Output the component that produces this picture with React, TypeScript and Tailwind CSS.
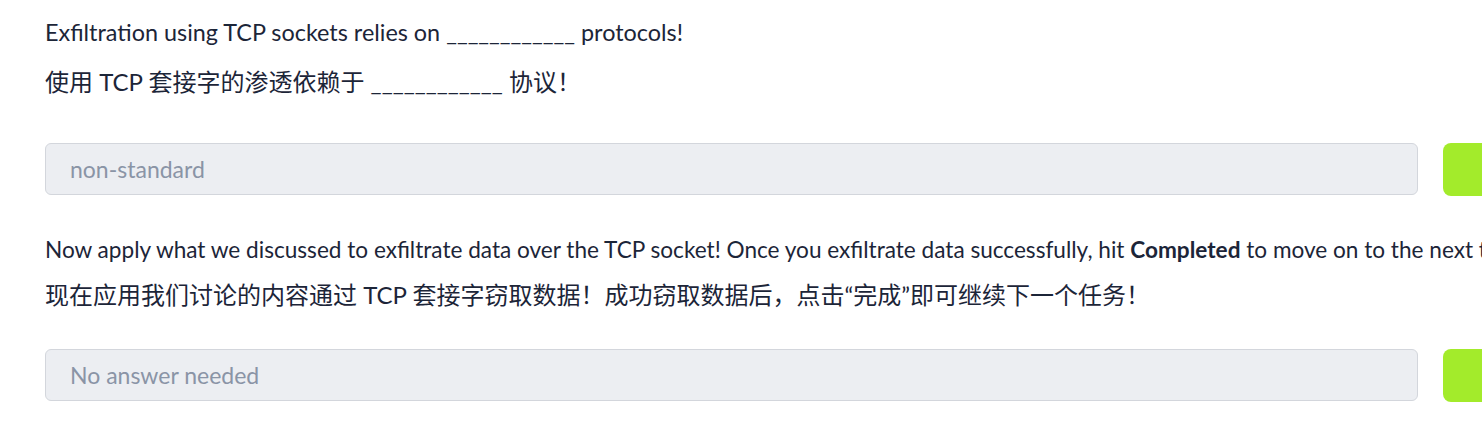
const font = { fontFamily: 'Lato, "Noto Sans CJK SC", sans-serif' };

function AnswerRow({ placeholder }: { placeholder: string }) {
  return (
    <div className="flex gap-[25px]">
      <input
        disabled
        placeholder={placeholder}
        className="w-[1373px] shrink-0 h-[52px] rounded-md border border-[#d3d6dc] bg-[#eceef2] px-[24px] text-[23px] text-[#1c2538] placeholder:text-[#8a94a6] outline-none"
        style={font}
      />
      <button className="w-[100px] h-[53px] shrink-0 rounded-lg bg-[#a3eb2b]" />
    </div>
  );
}

export default function App() {
  return (
    <div className="w-[1482px] h-[425px] overflow-hidden bg-white text-[#1c2538]" style={font}>
      <div className="w-[1700px] px-[45px] whitespace-nowrap">
        <p className="pt-[18px] text-[23.4px] leading-[28px]">
          Exfiltration using TCP sockets relies on ____________ protocols!
        </p>
        <p className="mt-[20px] text-[24px] leading-[32px]">
          使用 TCP 套接字的渗透依赖于 ____________ 协议！
        </p>
        <div className="mt-[45px]">
          <AnswerRow placeholder="non-standard" />
        </div>
        <p className="mt-[40px] text-[22.6px] leading-[28px]">
          Now apply what we discussed to exfiltrate data over the TCP socket! Once you exfiltrate data
          successfully, hit <strong className="font-bold">Completed</strong> to move on to the next task!
        </p>
        <p className="mt-[15px] text-[24px] leading-[32px]">
          现在应用我们讨论的内容通过 TCP 套接字窃取数据！成功窃取数据后，点击“完成”即可继续下一个任务！
        </p>
        <div className="mt-[38px]">
          <AnswerRow placeholder="No answer needed" />
        </div>
      </div>
    </div>
  );
}
